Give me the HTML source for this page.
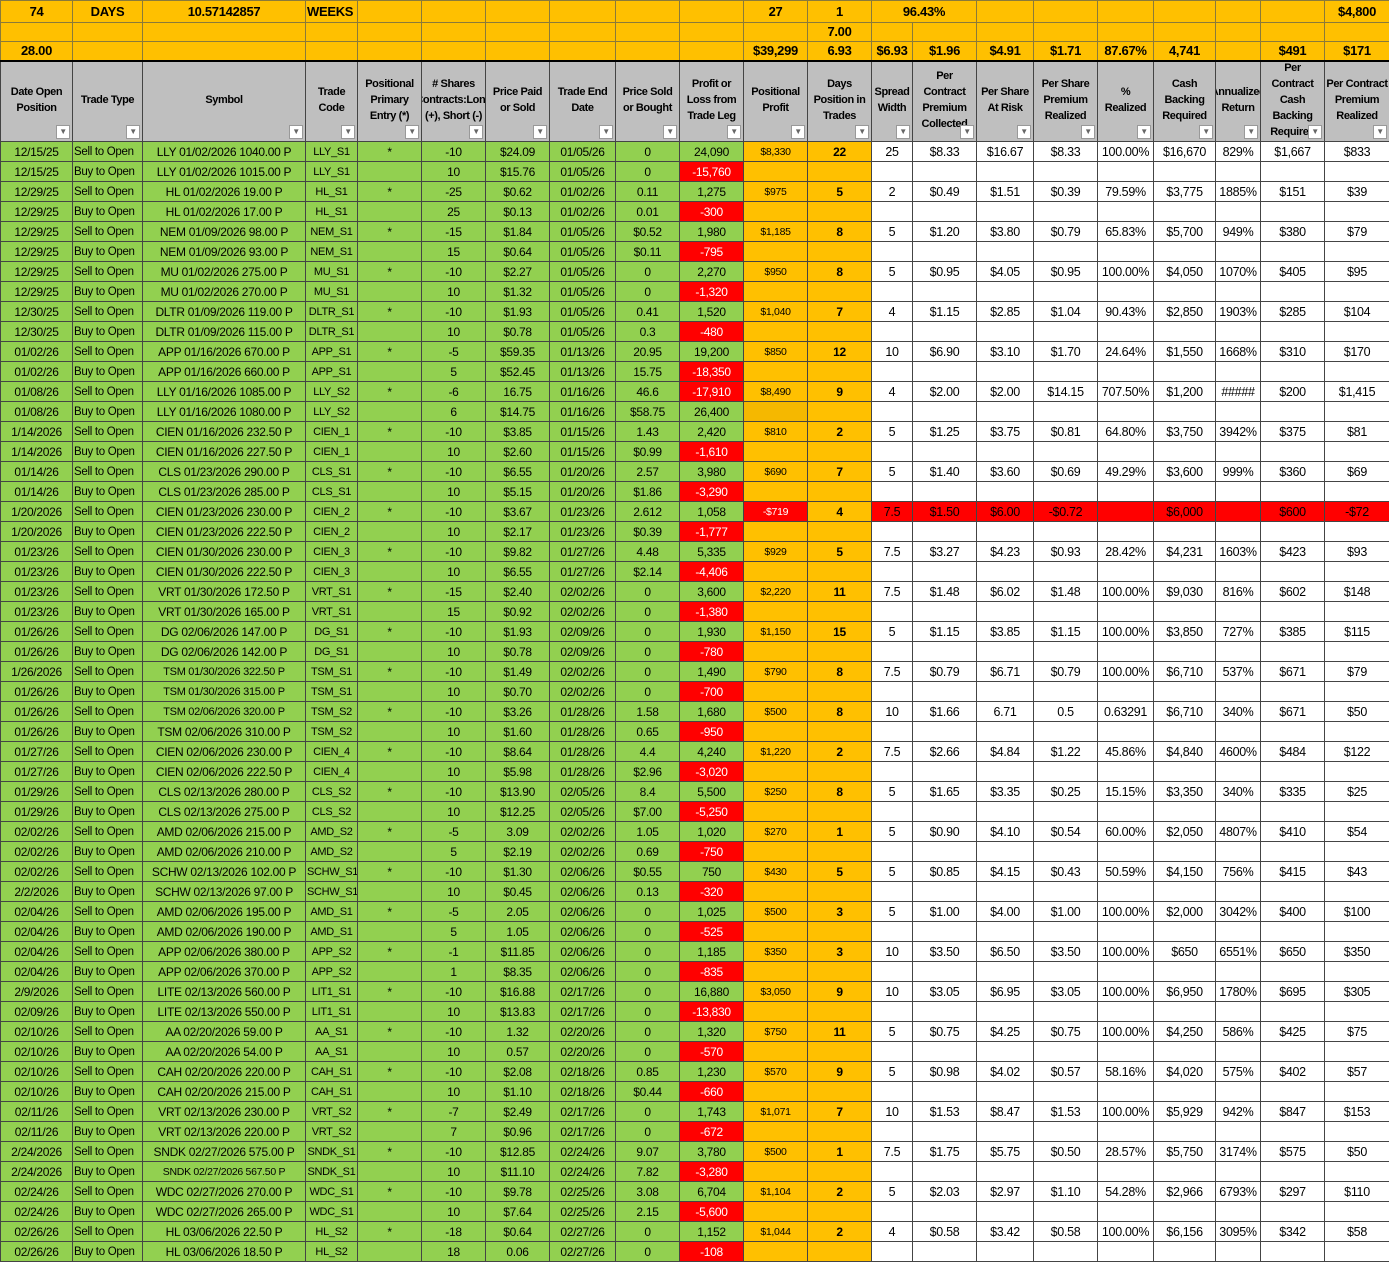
<!DOCTYPE html>
<html><head><meta charset="utf-8">
<style>
*{margin:0;padding:0;box-sizing:border-box}
body{width:1389px;height:1263px;overflow:hidden;background:#fff;font-family:"Liberation Sans",Arial,sans-serif}
table{border-collapse:collapse;table-layout:fixed;width:1389px}
td{border:1px solid #444;text-align:center;white-space:nowrap;overflow:hidden;font-size:12px;letter-spacing:-0.3px;color:#000;padding:0 1px;vertical-align:middle;line-height:18px}
tr.t td{background:#FFC000;font-weight:bold;font-size:13px;border-color:#8a7a3a}
tr.t1 td{height:22px}tr.t2 td{height:19px}tr.t3 td{height:19px}
tr.t3 td{border-bottom:2px solid #000}
tr.h td{background:#BFBFBF;font-weight:bold;font-size:11px;line-height:16px;white-space:normal;letter-spacing:-0.4px;padding:0;height:80px}
tr.h td div{height:79px;overflow:hidden;position:relative;display:flex;align-items:center;justify-content:center;padding:0 1px 4px}
tr.h td i{position:absolute;right:2px;bottom:2px;width:14px;height:14px;background:#fff;border:1px solid #999;font-style:normal;font-size:8px;line-height:12px;color:#666;text-align:center}
tr.d td{height:20px;line-height:18px}
tr.d td:nth-child(-n+9){background:#92D050}
tr.d td:nth-child(10){background:#92D050}
tr.d td.r{background:#FF0000;color:#fff}
tr.d td:nth-child(11){background:#FFC000;font-size:10.5px}
tr.d td:nth-child(12){background:#FFC000;font-weight:bold}
tr.d td:nth-child(n+13){background:#fff;font-size:12.5px}
tr.d td:nth-child(2){font-size:11.5px;text-align:left;padding-left:1px}
tr.d td:nth-child(4){font-size:11px}
tr.d td:nth-child(11).rk{background:#FF0000;color:#fff}
tr.d.red td:nth-child(n+13){background:#FF0000}
</style></head><body>
<table>
<colgroup>
<col style="width:72px"><col style="width:70px"><col style="width:163px"><col style="width:52px"><col style="width:64px"><col style="width:64px"><col style="width:64px"><col style="width:66px"><col style="width:64px"><col style="width:64px"><col style="width:64px"><col style="width:64px"><col style="width:41px"><col style="width:64px"><col style="width:57px"><col style="width:64px"><col style="width:56px"><col style="width:62px"><col style="width:45px"><col style="width:64px"><col style="width:65px">
</colgroup>
<tr class="t t1"><td>74</td><td>DAYS</td><td>10.57142857</td><td style="text-align:left">WEEKS</td><td></td><td></td><td></td><td></td><td></td><td></td><td>27</td><td>1</td><td colspan="2">96.43%</td><td></td><td></td><td></td><td></td><td></td><td></td><td>$4,800</td></tr>
<tr class="t t2"><td></td><td></td><td></td><td></td><td></td><td></td><td></td><td></td><td></td><td></td><td></td><td>7.00</td><td></td><td></td><td></td><td></td><td></td><td></td><td></td><td></td><td></td></tr>
<tr class="t t3"><td>28.00</td><td></td><td></td><td></td><td></td><td></td><td></td><td></td><td></td><td></td><td>$39,299</td><td>6.93</td><td>$6.93</td><td>$1.96</td><td>$4.91</td><td>$1.71</td><td>87.67%</td><td>4,741</td><td></td><td>$491</td><td>$171</td></tr>
<tr class="h"><td><div>Date Open Position<i>▼</i></div></td><td><div>Trade Type<i>▼</i></div></td><td><div>Symbol<i>▼</i></div></td><td><div>Trade Code<i>▼</i></div></td><td><div>Positional Primary Entry (*)<i>▼</i></div></td><td><div># Shares Contracts:Long (+), Short (-)<i>▼</i></div></td><td><div>Price Paid or Sold<i>▼</i></div></td><td><div>Trade End Date<i>▼</i></div></td><td><div>Price Sold or Bought<i>▼</i></div></td><td><div>Profit or Loss from Trade Leg<i>▼</i></div></td><td><div>Positional Profit<i>▼</i></div></td><td><div>Days Position in Trades<i>▼</i></div></td><td><div>Spread Width<i>▼</i></div></td><td><div>Per Contract Premium Collected<i>▼</i></div></td><td><div>Per Share At Risk<i>▼</i></div></td><td><div>Per Share Premium Realized<i>▼</i></div></td><td><div>% Realized<i>▼</i></div></td><td><div>Cash Backing Required<i>▼</i></div></td><td><div>Annualized Return<i>▼</i></div></td><td><div>Per Contract Cash Backing Required<i>▼</i></div></td><td><div>Per Contract Premium Realized<i>▼</i></div></td></tr>

<tr class="d"><td>12/15/25</td><td>Sell to Open</td><td>LLY 01/02/2026 1040.00 P</td><td>LLY_S1</td><td>*</td><td>-10</td><td>$24.09</td><td>01/05/26</td><td>0</td><td>24,090</td><td>$8,330</td><td>22</td><td>25</td><td>$8.33</td><td>$16.67</td><td>$8.33</td><td>100.00%</td><td>$16,670</td><td>829%</td><td>$1,667</td><td>$833</td></tr>
<tr class="d"><td>12/15/25</td><td>Buy to Open</td><td>LLY 01/02/2026 1015.00 P</td><td>LLY_S1</td><td></td><td>10</td><td>$15.76</td><td>01/05/26</td><td>0</td><td class="r">-15,760</td><td></td><td></td><td></td><td></td><td></td><td></td><td></td><td></td><td></td><td></td><td></td></tr>
<tr class="d"><td>12/29/25</td><td>Sell to Open</td><td>HL 01/02/2026 19.00 P</td><td>HL_S1</td><td>*</td><td>-25</td><td>$0.62</td><td>01/02/26</td><td>0.11</td><td>1,275</td><td>$975</td><td>5</td><td>2</td><td>$0.49</td><td>$1.51</td><td>$0.39</td><td>79.59%</td><td>$3,775</td><td>1885%</td><td>$151</td><td>$39</td></tr>
<tr class="d"><td>12/29/25</td><td>Buy to Open</td><td>HL 01/02/2026 17.00 P</td><td>HL_S1</td><td></td><td>25</td><td>$0.13</td><td>01/02/26</td><td>0.01</td><td class="r">-300</td><td></td><td></td><td></td><td></td><td></td><td></td><td></td><td></td><td></td><td></td><td></td></tr>
<tr class="d"><td>12/29/25</td><td>Sell to Open</td><td>NEM 01/09/2026 98.00 P</td><td>NEM_S1</td><td>*</td><td>-15</td><td>$1.84</td><td>01/05/26</td><td>$0.52</td><td>1,980</td><td>$1,185</td><td>8</td><td>5</td><td>$1.20</td><td>$3.80</td><td>$0.79</td><td>65.83%</td><td>$5,700</td><td>949%</td><td>$380</td><td>$79</td></tr>
<tr class="d"><td>12/29/25</td><td>Buy to Open</td><td>NEM 01/09/2026 93.00 P</td><td>NEM_S1</td><td></td><td>15</td><td>$0.64</td><td>01/05/26</td><td>$0.11</td><td class="r">-795</td><td></td><td></td><td></td><td></td><td></td><td></td><td></td><td></td><td></td><td></td><td></td></tr>
<tr class="d"><td>12/29/25</td><td>Sell to Open</td><td>MU 01/02/2026 275.00 P</td><td>MU_S1</td><td>*</td><td>-10</td><td>$2.27</td><td>01/05/26</td><td>0</td><td>2,270</td><td>$950</td><td>8</td><td>5</td><td>$0.95</td><td>$4.05</td><td>$0.95</td><td>100.00%</td><td>$4,050</td><td>1070%</td><td>$405</td><td>$95</td></tr>
<tr class="d"><td>12/29/25</td><td>Buy to Open</td><td>MU 01/02/2026 270.00 P</td><td>MU_S1</td><td></td><td>10</td><td>$1.32</td><td>01/05/26</td><td>0</td><td class="r">-1,320</td><td></td><td></td><td></td><td></td><td></td><td></td><td></td><td></td><td></td><td></td><td></td></tr>
<tr class="d"><td>12/30/25</td><td>Sell to Open</td><td>DLTR 01/09/2026 119.00 P</td><td>DLTR_S1</td><td>*</td><td>-10</td><td>$1.93</td><td>01/05/26</td><td>0.41</td><td>1,520</td><td>$1,040</td><td>7</td><td>4</td><td>$1.15</td><td>$2.85</td><td>$1.04</td><td>90.43%</td><td>$2,850</td><td>1903%</td><td>$285</td><td>$104</td></tr>
<tr class="d"><td>12/30/25</td><td>Buy to Open</td><td>DLTR 01/09/2026 115.00 P</td><td>DLTR_S1</td><td></td><td>10</td><td>$0.78</td><td>01/05/26</td><td>0.3</td><td class="r">-480</td><td></td><td></td><td></td><td></td><td></td><td></td><td></td><td></td><td></td><td></td><td></td></tr>
<tr class="d"><td>01/02/26</td><td>Sell to Open</td><td>APP 01/16/2026 670.00 P</td><td>APP_S1</td><td>*</td><td>-5</td><td>$59.35</td><td>01/13/26</td><td>20.95</td><td>19,200</td><td>$850</td><td>12</td><td>10</td><td>$6.90</td><td>$3.10</td><td>$1.70</td><td>24.64%</td><td>$1,550</td><td>1668%</td><td>$310</td><td>$170</td></tr>
<tr class="d"><td>01/02/26</td><td>Buy to Open</td><td>APP 01/16/2026 660.00 P</td><td>APP_S1</td><td></td><td>5</td><td>$52.45</td><td>01/13/26</td><td>15.75</td><td class="r">-18,350</td><td></td><td></td><td></td><td></td><td></td><td></td><td></td><td></td><td></td><td></td><td></td></tr>
<tr class="d"><td>01/08/26</td><td>Sell to Open</td><td>LLY 01/16/2026 1085.00 P</td><td>LLY_S2</td><td>*</td><td>-6</td><td>16.75</td><td>01/16/26</td><td>46.6</td><td class="r">-17,910</td><td>$8,490</td><td>9</td><td>4</td><td>$2.00</td><td>$2.00</td><td>$14.15</td><td>707.50%</td><td>$1,200</td><td>#####</td><td>$200</td><td>$1,415</td></tr>
<tr class="d"><td>01/08/26</td><td>Buy to Open</td><td>LLY 01/16/2026 1080.00 P</td><td>LLY_S2</td><td></td><td>6</td><td>$14.75</td><td>01/16/26</td><td>$58.75</td><td>26,400</td><td style="background:#F5B800"></td><td></td><td></td><td></td><td></td><td></td><td></td><td></td><td></td><td></td><td></td></tr>
<tr class="d"><td>1/14/2026</td><td>Sell to Open</td><td>CIEN 01/16/2026 232.50 P</td><td>CIEN_1</td><td>*</td><td>-10</td><td>$3.85</td><td>01/15/26</td><td>1.43</td><td>2,420</td><td>$810</td><td>2</td><td>5</td><td>$1.25</td><td>$3.75</td><td>$0.81</td><td>64.80%</td><td>$3,750</td><td>3942%</td><td>$375</td><td>$81</td></tr>
<tr class="d"><td>1/14/2026</td><td>Buy to Open</td><td>CIEN 01/16/2026 227.50 P</td><td>CIEN_1</td><td></td><td>10</td><td>$2.60</td><td>01/15/26</td><td>$0.99</td><td class="r">-1,610</td><td></td><td></td><td></td><td></td><td></td><td></td><td></td><td></td><td></td><td></td><td></td></tr>
<tr class="d"><td>01/14/26</td><td>Sell to Open</td><td>CLS 01/23/2026 290.00 P</td><td>CLS_S1</td><td>*</td><td>-10</td><td>$6.55</td><td>01/20/26</td><td>2.57</td><td>3,980</td><td>$690</td><td>7</td><td>5</td><td>$1.40</td><td>$3.60</td><td>$0.69</td><td>49.29%</td><td>$3,600</td><td>999%</td><td>$360</td><td>$69</td></tr>
<tr class="d"><td>01/14/26</td><td>Buy to Open</td><td>CLS 01/23/2026 285.00 P</td><td>CLS_S1</td><td></td><td>10</td><td>$5.15</td><td>01/20/26</td><td>$1.86</td><td class="r">-3,290</td><td></td><td></td><td></td><td></td><td></td><td></td><td></td><td></td><td></td><td></td><td></td></tr>
<tr class="d red"><td>1/20/2026</td><td>Sell to Open</td><td>CIEN 01/23/2026 230.00 P</td><td>CIEN_2</td><td>*</td><td>-10</td><td>$3.67</td><td>01/23/26</td><td>2.612</td><td>1,058</td><td class="rk">-$719</td><td>4</td><td>7.5</td><td>$1.50</td><td>$6.00</td><td>-$0.72</td><td></td><td>$6,000</td><td></td><td>$600</td><td>-$72</td></tr>
<tr class="d"><td>1/20/2026</td><td>Buy to Open</td><td>CIEN 01/23/2026 222.50 P</td><td>CIEN_2</td><td></td><td>10</td><td>$2.17</td><td>01/23/26</td><td>$0.39</td><td class="r">-1,777</td><td></td><td></td><td></td><td></td><td></td><td></td><td></td><td></td><td></td><td></td><td></td></tr>
<tr class="d"><td>01/23/26</td><td>Sell to Open</td><td>CIEN 01/30/2026 230.00 P</td><td>CIEN_3</td><td>*</td><td>-10</td><td>$9.82</td><td>01/27/26</td><td>4.48</td><td>5,335</td><td>$929</td><td>5</td><td>7.5</td><td>$3.27</td><td>$4.23</td><td>$0.93</td><td>28.42%</td><td>$4,231</td><td>1603%</td><td>$423</td><td>$93</td></tr>
<tr class="d"><td>01/23/26</td><td>Buy to Open</td><td>CIEN 01/30/2026 222.50 P</td><td>CIEN_3</td><td></td><td>10</td><td>$6.55</td><td>01/27/26</td><td>$2.14</td><td class="r">-4,406</td><td></td><td></td><td></td><td></td><td></td><td></td><td></td><td></td><td></td><td></td><td></td></tr>
<tr class="d"><td>01/23/26</td><td>Sell to Open</td><td>VRT 01/30/2026 172.50 P</td><td>VRT_S1</td><td>*</td><td>-15</td><td>$2.40</td><td>02/02/26</td><td>0</td><td>3,600</td><td>$2,220</td><td>11</td><td>7.5</td><td>$1.48</td><td>$6.02</td><td>$1.48</td><td>100.00%</td><td>$9,030</td><td>816%</td><td>$602</td><td>$148</td></tr>
<tr class="d"><td>01/23/26</td><td>Buy to Open</td><td>VRT 01/30/2026 165.00 P</td><td>VRT_S1</td><td></td><td>15</td><td>$0.92</td><td>02/02/26</td><td>0</td><td class="r">-1,380</td><td></td><td></td><td></td><td></td><td></td><td></td><td></td><td></td><td></td><td></td><td></td></tr>
<tr class="d"><td>01/26/26</td><td>Sell to Open</td><td>DG 02/06/2026 147.00 P</td><td>DG_S1</td><td>*</td><td>-10</td><td>$1.93</td><td>02/09/26</td><td>0</td><td>1,930</td><td>$1,150</td><td>15</td><td>5</td><td>$1.15</td><td>$3.85</td><td>$1.15</td><td>100.00%</td><td>$3,850</td><td>727%</td><td>$385</td><td>$115</td></tr>
<tr class="d"><td>01/26/26</td><td>Buy to Open</td><td>DG 02/06/2026 142.00 P</td><td>DG_S1</td><td></td><td>10</td><td>$0.78</td><td>02/09/26</td><td>0</td><td class="r">-780</td><td></td><td></td><td></td><td></td><td></td><td></td><td></td><td></td><td></td><td></td><td></td></tr>
<tr class="d"><td>1/26/2026</td><td>Sell to Open</td><td style="font-size:11px">TSM 01/30/2026 322.50 P</td><td>TSM_S1</td><td>*</td><td>-10</td><td>$1.49</td><td>02/02/26</td><td>0</td><td>1,490</td><td>$790</td><td>8</td><td>7.5</td><td>$0.79</td><td>$6.71</td><td>$0.79</td><td>100.00%</td><td>$6,710</td><td>537%</td><td>$671</td><td>$79</td></tr>
<tr class="d"><td>01/26/26</td><td>Buy to Open</td><td style="font-size:11px">TSM 01/30/2026 315.00 P</td><td>TSM_S1</td><td></td><td>10</td><td>$0.70</td><td>02/02/26</td><td>0</td><td class="r">-700</td><td></td><td></td><td></td><td></td><td></td><td></td><td></td><td></td><td></td><td></td><td></td></tr>
<tr class="d"><td>01/26/26</td><td>Sell to Open</td><td style="font-size:11px">TSM 02/06/2026 320.00 P</td><td>TSM_S2</td><td>*</td><td>-10</td><td>$3.26</td><td>01/28/26</td><td>1.58</td><td>1,680</td><td>$500</td><td>8</td><td>10</td><td>$1.66</td><td>6.71</td><td>0.5</td><td>0.63291</td><td>$6,710</td><td>340%</td><td>$671</td><td>$50</td></tr>
<tr class="d"><td>01/26/26</td><td>Buy to Open</td><td>TSM 02/06/2026 310.00 P</td><td>TSM_S2</td><td></td><td>10</td><td>$1.60</td><td>01/28/26</td><td>0.65</td><td class="r">-950</td><td></td><td></td><td></td><td></td><td></td><td></td><td></td><td></td><td></td><td></td><td></td></tr>
<tr class="d"><td>01/27/26</td><td>Sell to Open</td><td>CIEN 02/06/2026 230.00 P</td><td>CIEN_4</td><td>*</td><td>-10</td><td>$8.64</td><td>01/28/26</td><td>4.4</td><td>4,240</td><td>$1,220</td><td>2</td><td>7.5</td><td>$2.66</td><td>$4.84</td><td>$1.22</td><td>45.86%</td><td>$4,840</td><td>4600%</td><td>$484</td><td>$122</td></tr>
<tr class="d"><td>01/27/26</td><td>Buy to Open</td><td>CIEN 02/06/2026 222.50 P</td><td>CIEN_4</td><td></td><td>10</td><td>$5.98</td><td>01/28/26</td><td>$2.96</td><td class="r">-3,020</td><td></td><td></td><td></td><td></td><td></td><td></td><td></td><td></td><td></td><td></td><td></td></tr>
<tr class="d"><td>01/29/26</td><td>Sell to Open</td><td>CLS 02/13/2026 280.00 P</td><td>CLS_S2</td><td>*</td><td>-10</td><td>$13.90</td><td>02/05/26</td><td>8.4</td><td>5,500</td><td>$250</td><td>8</td><td>5</td><td>$1.65</td><td>$3.35</td><td>$0.25</td><td>15.15%</td><td>$3,350</td><td>340%</td><td>$335</td><td>$25</td></tr>
<tr class="d"><td>01/29/26</td><td>Buy to Open</td><td>CLS 02/13/2026 275.00 P</td><td>CLS_S2</td><td></td><td>10</td><td>$12.25</td><td>02/05/26</td><td>$7.00</td><td class="r">-5,250</td><td></td><td></td><td></td><td></td><td></td><td></td><td></td><td></td><td></td><td></td><td></td></tr>
<tr class="d"><td>02/02/26</td><td>Sell to Open</td><td>AMD 02/06/2026 215.00 P</td><td>AMD_S2</td><td>*</td><td>-5</td><td>3.09</td><td>02/02/26</td><td>1.05</td><td>1,020</td><td>$270</td><td>1</td><td>5</td><td>$0.90</td><td>$4.10</td><td>$0.54</td><td>60.00%</td><td>$2,050</td><td>4807%</td><td>$410</td><td>$54</td></tr>
<tr class="d"><td>02/02/26</td><td>Buy to Open</td><td>AMD 02/06/2026 210.00 P</td><td>AMD_S2</td><td></td><td>5</td><td>$2.19</td><td>02/02/26</td><td>0.69</td><td class="r">-750</td><td></td><td></td><td></td><td></td><td></td><td></td><td></td><td></td><td></td><td></td><td></td></tr>
<tr class="d"><td>02/02/26</td><td>Sell to Open</td><td>SCHW 02/13/2026 102.00 P</td><td>SCHW_S1</td><td>*</td><td>-10</td><td>$1.30</td><td>02/06/26</td><td>$0.55</td><td>750</td><td>$430</td><td>5</td><td>5</td><td>$0.85</td><td>$4.15</td><td>$0.43</td><td>50.59%</td><td>$4,150</td><td>756%</td><td>$415</td><td>$43</td></tr>
<tr class="d"><td>2/2/2026</td><td>Buy to Open</td><td>SCHW 02/13/2026 97.00 P</td><td>SCHW_S1</td><td></td><td>10</td><td>$0.45</td><td>02/06/26</td><td>0.13</td><td class="r">-320</td><td></td><td></td><td></td><td></td><td></td><td></td><td></td><td></td><td></td><td></td><td></td></tr>
<tr class="d"><td>02/04/26</td><td>Sell to Open</td><td>AMD 02/06/2026 195.00 P</td><td>AMD_S1</td><td>*</td><td>-5</td><td>2.05</td><td>02/06/26</td><td>0</td><td>1,025</td><td>$500</td><td>3</td><td>5</td><td>$1.00</td><td>$4.00</td><td>$1.00</td><td>100.00%</td><td>$2,000</td><td>3042%</td><td>$400</td><td>$100</td></tr>
<tr class="d"><td>02/04/26</td><td>Buy to Open</td><td>AMD 02/06/2026 190.00 P</td><td>AMD_S1</td><td></td><td>5</td><td>1.05</td><td>02/06/26</td><td>0</td><td class="r">-525</td><td></td><td></td><td></td><td></td><td></td><td></td><td></td><td></td><td></td><td></td><td></td></tr>
<tr class="d"><td>02/04/26</td><td>Sell to Open</td><td>APP 02/06/2026 380.00 P</td><td>APP_S2</td><td>*</td><td>-1</td><td>$11.85</td><td>02/06/26</td><td>0</td><td>1,185</td><td>$350</td><td>3</td><td>10</td><td>$3.50</td><td>$6.50</td><td>$3.50</td><td>100.00%</td><td>$650</td><td>6551%</td><td>$650</td><td>$350</td></tr>
<tr class="d"><td>02/04/26</td><td>Buy to Open</td><td>APP 02/06/2026 370.00 P</td><td>APP_S2</td><td></td><td>1</td><td>$8.35</td><td>02/06/26</td><td>0</td><td class="r">-835</td><td></td><td></td><td></td><td></td><td></td><td></td><td></td><td></td><td></td><td></td><td></td></tr>
<tr class="d"><td>2/9/2026</td><td>Sell to Open</td><td>LITE 02/13/2026 560.00 P</td><td>LIT1_S1</td><td>*</td><td>-10</td><td>$16.88</td><td>02/17/26</td><td>0</td><td>16,880</td><td>$3,050</td><td>9</td><td>10</td><td>$3.05</td><td>$6.95</td><td>$3.05</td><td>100.00%</td><td>$6,950</td><td>1780%</td><td>$695</td><td>$305</td></tr>
<tr class="d"><td>02/09/26</td><td>Buy to Open</td><td>LITE 02/13/2026 550.00 P</td><td>LIT1_S1</td><td></td><td>10</td><td>$13.83</td><td>02/17/26</td><td>0</td><td class="r">-13,830</td><td></td><td></td><td></td><td></td><td></td><td></td><td></td><td></td><td></td><td></td><td></td></tr>
<tr class="d"><td>02/10/26</td><td>Sell to Open</td><td>AA 02/20/2026 59.00 P</td><td>AA_S1</td><td>*</td><td>-10</td><td>1.32</td><td>02/20/26</td><td>0</td><td>1,320</td><td>$750</td><td>11</td><td>5</td><td>$0.75</td><td>$4.25</td><td>$0.75</td><td>100.00%</td><td>$4,250</td><td>586%</td><td>$425</td><td>$75</td></tr>
<tr class="d"><td>02/10/26</td><td>Buy to Open</td><td>AA 02/20/2026 54.00 P</td><td>AA_S1</td><td></td><td>10</td><td>0.57</td><td>02/20/26</td><td>0</td><td class="r">-570</td><td></td><td></td><td></td><td></td><td></td><td></td><td></td><td></td><td></td><td></td><td></td></tr>
<tr class="d"><td>02/10/26</td><td>Sell to Open</td><td>CAH 02/20/2026 220.00 P</td><td>CAH_S1</td><td>*</td><td>-10</td><td>$2.08</td><td>02/18/26</td><td>0.85</td><td>1,230</td><td>$570</td><td>9</td><td>5</td><td>$0.98</td><td>$4.02</td><td>$0.57</td><td>58.16%</td><td>$4,020</td><td>575%</td><td>$402</td><td>$57</td></tr>
<tr class="d"><td>02/10/26</td><td>Buy to Open</td><td>CAH 02/20/2026 215.00 P</td><td>CAH_S1</td><td></td><td>10</td><td>$1.10</td><td>02/18/26</td><td>$0.44</td><td class="r">-660</td><td></td><td></td><td></td><td></td><td></td><td></td><td></td><td></td><td></td><td></td><td></td></tr>
<tr class="d"><td>02/11/26</td><td>Sell to Open</td><td>VRT 02/13/2026 230.00 P</td><td>VRT_S2</td><td>*</td><td>-7</td><td>$2.49</td><td>02/17/26</td><td>0</td><td>1,743</td><td>$1,071</td><td>7</td><td>10</td><td>$1.53</td><td>$8.47</td><td>$1.53</td><td>100.00%</td><td>$5,929</td><td>942%</td><td>$847</td><td>$153</td></tr>
<tr class="d"><td>02/11/26</td><td>Buy to Open</td><td>VRT 02/13/2026 220.00 P</td><td>VRT_S2</td><td></td><td>7</td><td>$0.96</td><td>02/17/26</td><td>0</td><td class="r">-672</td><td></td><td></td><td></td><td></td><td></td><td></td><td></td><td></td><td></td><td></td><td></td></tr>
<tr class="d"><td>2/24/2026</td><td>Sell to Open</td><td>SNDK 02/27/2026 575.00 P</td><td>SNDK_S1</td><td>*</td><td>-10</td><td>$12.85</td><td>02/24/26</td><td>9.07</td><td>3,780</td><td>$500</td><td>1</td><td>7.5</td><td>$1.75</td><td>$5.75</td><td>$0.50</td><td>28.57%</td><td>$5,750</td><td>3174%</td><td>$575</td><td>$50</td></tr>
<tr class="d"><td>2/24/2026</td><td>Buy to Open</td><td style="font-size:10.5px">SNDK 02/27/2026 567.50 P</td><td>SNDK_S1</td><td></td><td>10</td><td>$11.10</td><td>02/24/26</td><td>7.82</td><td class="r">-3,280</td><td></td><td></td><td></td><td></td><td></td><td></td><td></td><td></td><td></td><td></td><td></td></tr>
<tr class="d"><td>02/24/26</td><td>Sell to Open</td><td>WDC 02/27/2026 270.00 P</td><td>WDC_S1</td><td>*</td><td>-10</td><td>$9.78</td><td>02/25/26</td><td>3.08</td><td>6,704</td><td>$1,104</td><td>2</td><td>5</td><td>$2.03</td><td>$2.97</td><td>$1.10</td><td>54.28%</td><td>$2,966</td><td>6793%</td><td>$297</td><td>$110</td></tr>
<tr class="d"><td>02/24/26</td><td>Buy to Open</td><td>WDC 02/27/2026 265.00 P</td><td>WDC_S1</td><td></td><td>10</td><td>$7.64</td><td>02/25/26</td><td>2.15</td><td class="r">-5,600</td><td></td><td></td><td></td><td></td><td></td><td></td><td></td><td></td><td></td><td></td><td></td></tr>
<tr class="d"><td>02/26/26</td><td>Sell to Open</td><td>HL 03/06/2026 22.50 P</td><td>HL_S2</td><td>*</td><td>-18</td><td>$0.64</td><td>02/27/26</td><td>0</td><td>1,152</td><td>$1,044</td><td>2</td><td>4</td><td>$0.58</td><td>$3.42</td><td>$0.58</td><td>100.00%</td><td>$6,156</td><td>3095%</td><td>$342</td><td>$58</td></tr>
<tr class="d"><td>02/26/26</td><td>Buy to Open</td><td>HL 03/06/2026 18.50 P</td><td>HL_S2</td><td></td><td>18</td><td>0.06</td><td>02/27/26</td><td>0</td><td class="r">-108</td><td></td><td></td><td></td><td></td><td></td><td></td><td></td><td></td><td></td><td></td><td></td></tr>
</table>
</body></html>
